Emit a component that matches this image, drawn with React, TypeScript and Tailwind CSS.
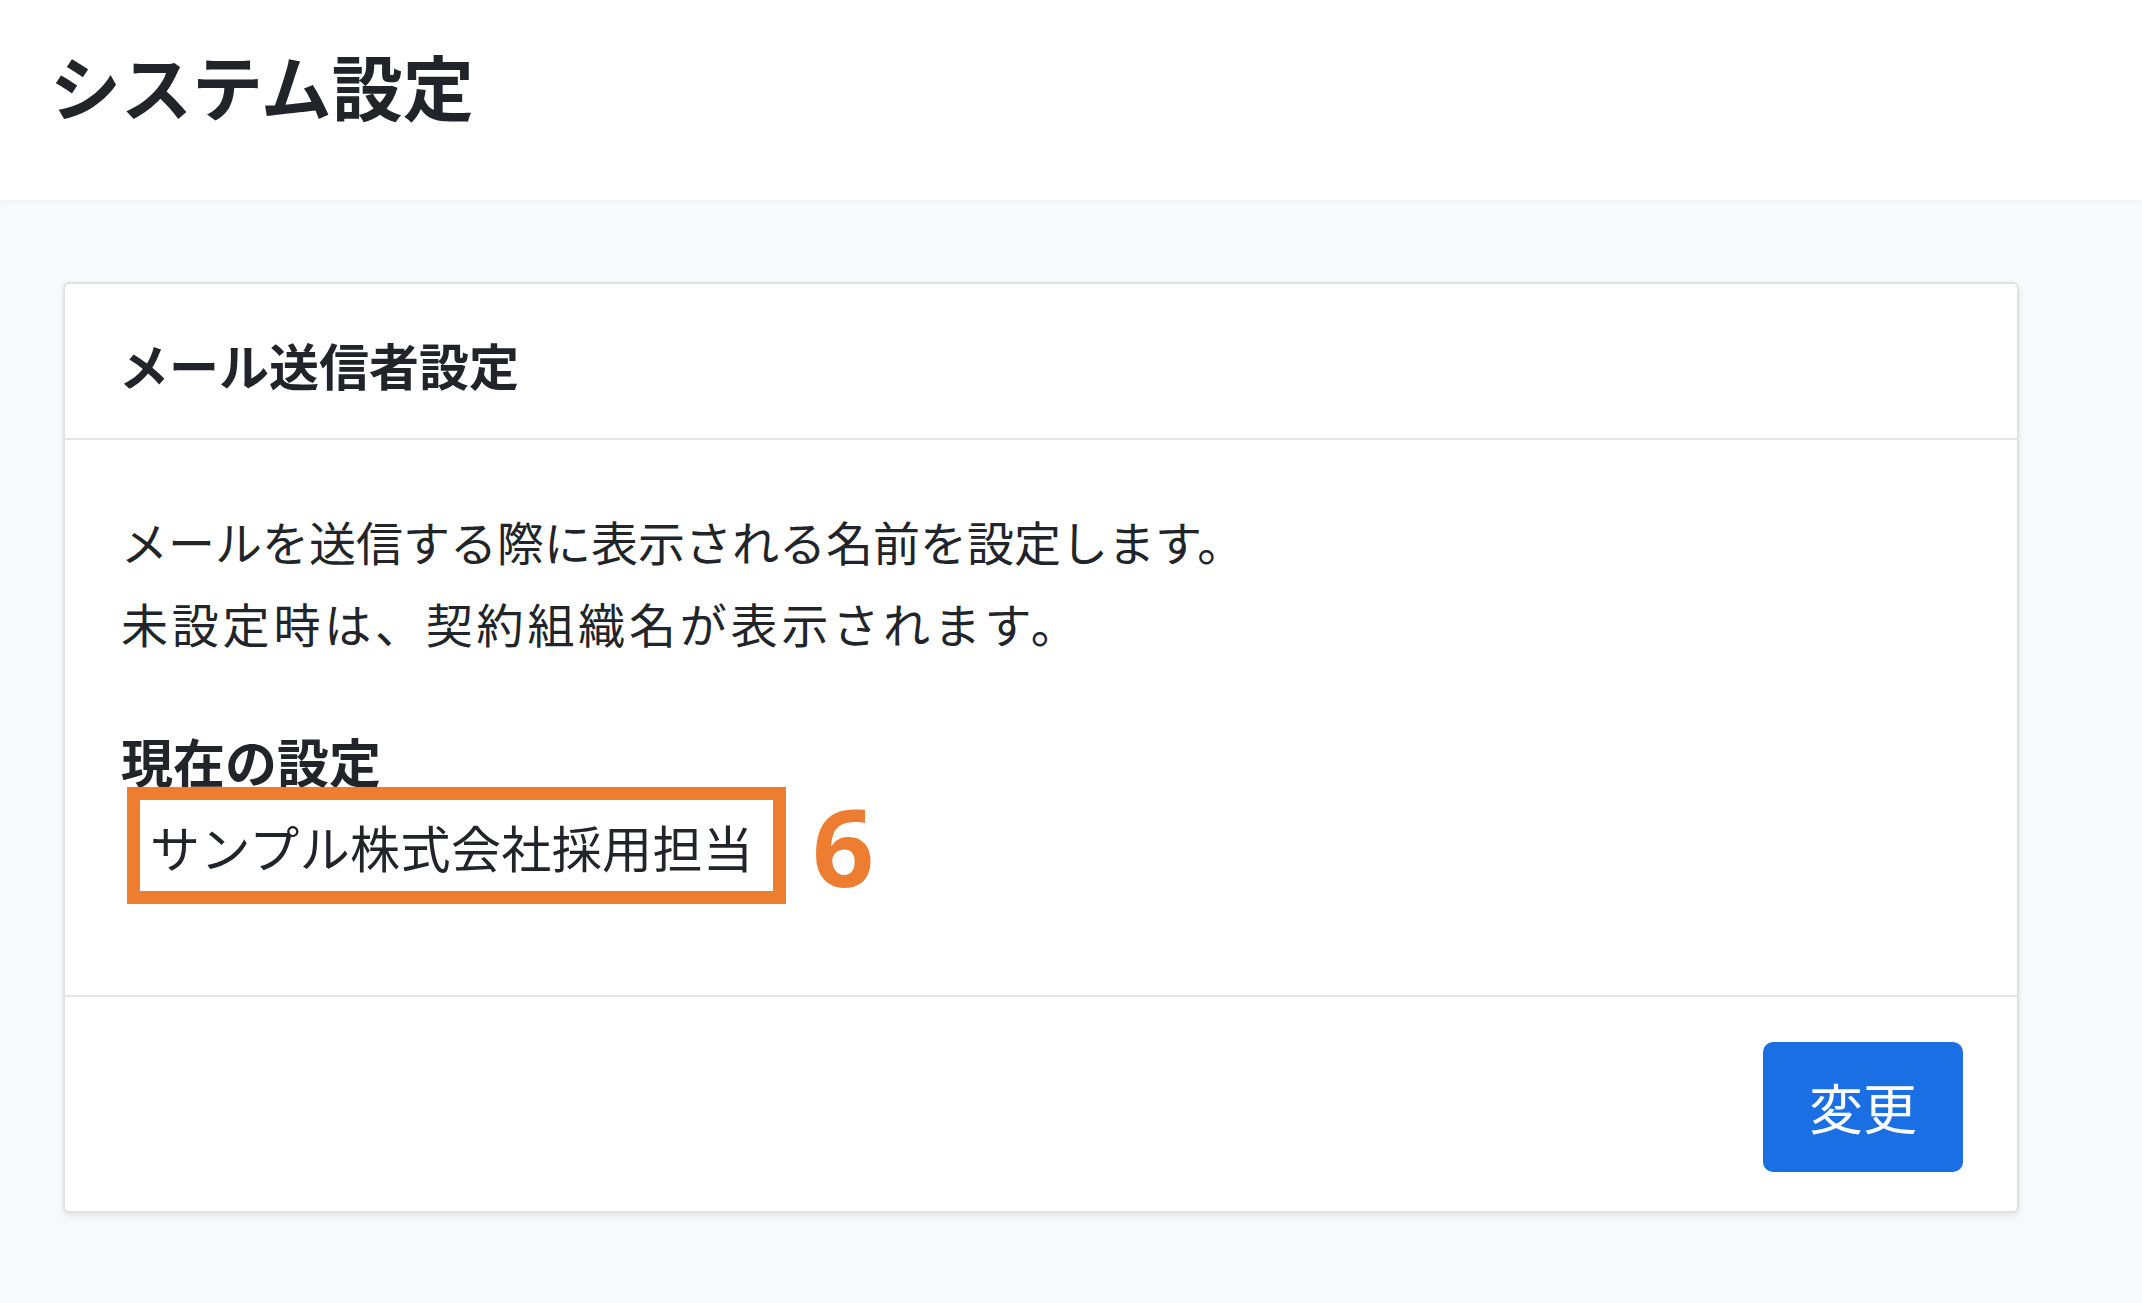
import React from "react";

const jp = { fontFamily: '"Noto Sans CJK JP", "Noto Sans", sans-serif' };

export default function App() {
  return (
    <div className="min-h-[1303px] flex flex-col bg-[#f8f9fa] text-[#212529]" style={jp}>
      <header className="h-[200px] bg-white pl-[50px] pt-[48px] shadow-[0_2px_4px_rgba(0,0,0,0.04)] relative z-10">
        <h1 className="text-[71px] leading-[72px] font-bold">システム設定</h1>
      </header>
      <main className="flex-1 pt-[82px] pl-[63px] pr-[123px]">
        <div className="rounded-[6px] border-2 border-[#dfe1e3] bg-white shadow-[0_3px_6px_rgba(0,0,0,0.08)]">
          <div className="h-[156px] border-b-2 border-[#e3e4e6] pl-[54px] pt-[6px] flex items-center">
            <h2 className="text-[50px] leading-[60px] font-bold">メール送信者設定</h2>
          </div>
          <div className="pl-[56px] pt-[60px] pb-[91px]">
            <p className="text-[47px] leading-[82px]">
              メールを送信する際に表示される名前を設定します。
              <br />
              <span className="tracking-[3.8px]">未設定時は、契約組織名が表示されます。</span>
            </p>
            <div className="mt-[67px] text-[52px] leading-[60px] font-bold">現在の設定</div>
            <div className="flex items-center -mt-[4px] ml-[6px]">
              <div className="h-[117px] border-[13px] border-[#ed7d31] pl-[10px] pr-[20px] flex items-center">
                <span className="text-[50px] leading-[60px] whitespace-nowrap tracking-[0.4px]">サンプル株式会社採用担当</span>
              </div>
              <span
                className="ml-[26px] text-[108px] leading-none font-bold text-[#ed7d31]"
                style={{ fontFamily: '"Open Sans", "Noto Sans", sans-serif' }}
              >
                6
              </span>
            </div>
          </div>
          <div className="border-t-2 border-[#e3e4e6] pt-[45px] pb-[39px] pr-[54px] flex justify-end">
            <button className="w-[200px] h-[130px] rounded-[10px] bg-[#1b6fe5] text-white text-[54px] leading-none flex items-center justify-center">
              変更
            </button>
          </div>
        </div>
      </main>
    </div>
  );
}
